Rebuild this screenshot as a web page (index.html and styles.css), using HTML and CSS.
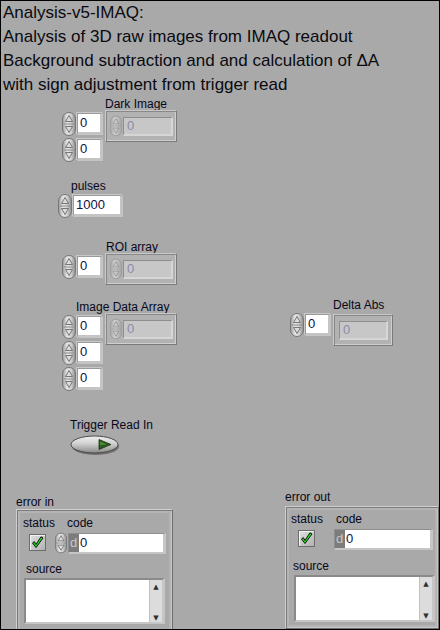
FILE: index.html
```html
<!DOCTYPE html>
<html>
<head>
<meta charset="utf-8">
<link rel="stylesheet" href="styles.css">
</head>
<body>
<svg class="defs" width="0" height="0" aria-hidden="true">
  <defs>
    <linearGradient id="spg" x1="0" y1="0" x2="1" y2="0">
      <stop offset="0" stop-color="#9a9a9a"/>
      <stop offset="0.35" stop-color="#e6e6e6"/>
      <stop offset="0.65" stop-color="#d4d4d4"/>
      <stop offset="1" stop-color="#8a8a8a"/>
    </linearGradient>
    <linearGradient id="spd" x1="0" y1="0" x2="1" y2="0">
      <stop offset="0" stop-color="#a8a8a8"/>
      <stop offset="0.4" stop-color="#cfcfcf"/>
      <stop offset="1" stop-color="#a4a4a4"/>
    </linearGradient>
    <linearGradient id="ovg" x1="0" y1="0" x2="0" y2="1">
      <stop offset="0" stop-color="#f0f0f0"/>
      <stop offset="0.45" stop-color="#d0d0d0"/>
      <stop offset="1" stop-color="#8a8a8a"/>
    </linearGradient>
    <linearGradient id="cbg" x1="0" y1="0" x2="1" y2="1">
      <stop offset="0" stop-color="#e2e2e2"/>
      <stop offset="1" stop-color="#b0b0b0"/>
    </linearGradient>
    <symbol id="spin" viewBox="0 0 14 24">
      <rect x="0.5" y="0.5" width="13" height="23" rx="6.5" fill="url(#spg)" stroke="#767676"/>
      <line x1="1.5" y1="12" x2="12.5" y2="12" stroke="#8c8c8c"/>
      <path d="M7 3.5 L10.5 9.5 H3.5 Z" fill="#dcdcdc" stroke="#6a6a6a" stroke-width="0.9"/>
      <path d="M7 20.5 L10.5 14.5 H3.5 Z" fill="#dcdcdc" stroke="#6a6a6a" stroke-width="0.9"/>
    </symbol>
    <symbol id="spindis" viewBox="0 0 14 24">
      <rect x="0.5" y="0.5" width="13" height="23" rx="6.5" fill="url(#spd)" stroke="#9a9a9a"/>
      <line x1="1.5" y1="12" x2="12.5" y2="12" stroke="#a4a4a4"/>
      <path d="M7 3.5 L10.5 9.5 H3.5 Z" fill="none" stroke="#949494" stroke-width="0.9"/>
      <path d="M7 20.5 L10.5 14.5 H3.5 Z" fill="none" stroke="#949494" stroke-width="0.9"/>
    </symbol>
    <symbol id="check" viewBox="0 0 17 17">
      <rect x="0.5" y="0.5" width="16" height="16" fill="url(#cbg)" stroke="#6c6c6c"/>
      <line x1="1" y1="1.5" x2="16" y2="1.5" stroke="#f4f4f4"/>
      <line x1="1.5" y1="1" x2="1.5" y2="16" stroke="#f4f4f4"/>
      <path d="M3.5 9 L7 13.5 L14 4 L12 2.8 L7 10.5 L5.3 7.6 Z" fill="#1ee61e" stroke="#101010" stroke-width="1" stroke-linejoin="round"/>
    </symbol>
  </defs>
</svg>

<div class="panel">
  <div class="title">
    <div>Analysis-v5-IMAQ:</div>
    <div>Analysis of 3D raw images from IMAQ readout</div>
    <div>Background subtraction and and calculation of &#916;A</div>
    <div>with sign adjustment from trigger read</div>
  </div>

  <!-- Dark Image -->
  <div class="ctl c-dark">
    <div class="lbl l-dark">Dark Image</div>
    <div class="arr">
      <div class="idxcol">
        <div class="num"><svg class="spin"><use href="#spin"/></svg><div class="nbox">0</div></div>
        <div class="num"><svg class="spin"><use href="#spin"/></svg><div class="nbox">0</div></div>
      </div>
      <div class="elem"><svg class="spin-d"><use href="#spindis"/></svg><div class="efield">0</div></div>
    </div>
  </div>

  <!-- pulses -->
  <div class="ctl c-pulses">
    <div class="lbl l-pulses">pulses</div>
    <div class="num"><svg class="spin"><use href="#spin"/></svg><div class="nbox wide">1000</div></div>
  </div>

  <!-- ROI array -->
  <div class="ctl c-roi">
    <div class="lbl l-roi">ROI array</div>
    <div class="arr">
      <div class="idxcol">
        <div class="num"><svg class="spin"><use href="#spin"/></svg><div class="nbox">0</div></div>
      </div>
      <div class="elem"><svg class="spin-d"><use href="#spindis"/></svg><div class="efield">0</div></div>
    </div>
  </div>

  <!-- Image Data Array -->
  <div class="ctl c-img">
    <div class="lbl l-img">Image Data Array</div>
    <div class="arr">
      <div class="idxcol">
        <div class="num"><svg class="spin"><use href="#spin"/></svg><div class="nbox">0</div></div>
        <div class="num"><svg class="spin"><use href="#spin"/></svg><div class="nbox">0</div></div>
        <div class="num"><svg class="spin"><use href="#spin"/></svg><div class="nbox">0</div></div>
      </div>
      <div class="elem"><svg class="spin-d"><use href="#spindis"/></svg><div class="efield">0</div></div>
    </div>
  </div>

  <!-- Delta Abs -->
  <div class="ctl c-delta">
    <div class="lbl l-delta">Delta Abs</div>
    <div class="arr">
      <div class="idxcol">
        <div class="num"><svg class="spin"><use href="#spin"/></svg><div class="nbox">0</div></div>
      </div>
      <div class="elem narrow"><div class="efield">0</div></div>
    </div>
  </div>

  <!-- Trigger Read In -->
  <div class="ctl c-trig">
    <div class="lbl">Trigger Read In</div>
    <svg class="oval" viewBox="0 0 50 22" width="50" height="22">
      <ellipse cx="25.5" cy="12.5" rx="23.5" ry="8.5" fill="#707070"/>
      <ellipse cx="24.5" cy="10.5" rx="23.5" ry="8.5" fill="url(#ovg)" stroke="#4a4a4a"/>
      <path d="M29 5.5 L41 10.5 L29 15.5 Z" fill="#2c5a22" stroke="#1a3312" stroke-width="0.8"/>
      <path d="M30 7.5 L37 10.3 L30 11.3 Z" fill="#4c8a38"/>
    </svg>
  </div>

  <!-- error in -->
  <div class="ctl c-errin">
    <div class="lbl">error in</div>
    <div class="cluster cl-in">
      <div class="errtop">
        <div class="scol">
          <div class="lbl">status</div>
          <svg class="chk"><use href="#check"/></svg>
        </div>
        <div class="ccol">
          <div class="lbl l-code">code</div>
          <div class="num"><svg class="spin sm"><use href="#spin"/></svg><div class="cbox"><span class="dpre">d</span><span class="cval">0</span></div></div>
        </div>
      </div>
      <div class="lbl l-src">source</div>
      <div class="srcbox"><div class="sb"><span class="ar">&#9650;</span><span class="ar">&#9660;</span></div></div>
    </div>
  </div>

  <!-- error out -->
  <div class="ctl c-errout">
    <div class="lbl">error out</div>
    <div class="cluster cl-out">
      <div class="errtop">
        <div class="scol">
          <div class="lbl">status</div>
          <svg class="chk"><use href="#check"/></svg>
        </div>
        <div class="ccol out">
          <div class="lbl l-code-o">code</div>
          <div class="num"><div class="cbox"><span class="dpre">d</span><span class="cval">0</span></div></div>
        </div>
      </div>
      <div class="lbl l-src">source</div>
      <div class="srcbox"><div class="sb"><span class="ar">&#9650;</span><span class="ar">&#9660;</span></div></div>
    </div>
  </div>
</div>
</body>
</html>
```
FILE: styles.css
```css
* { box-sizing: border-box; }
html, body { margin: 0; padding: 0; background: #a9a9a9; }
.defs { display: block; width: 0; height: 0; overflow: hidden; }

.panel {
  position: relative;
  width: 440px;
  height: 630px;
  border: 1px solid #000;
  background: #a9a9a9;
  overflow: hidden;
  font-family: "Liberation Sans", Arial, sans-serif;
  color: #000;
}

.title {
  padding-left: 2px;
  font-size: 17px;
  line-height: 24px;
  color: #0a0a10;
}

.ctl { position: absolute; }
.lbl { font-size: 12px; line-height: 16px; height: 16px; white-space: nowrap; color: #08081a; }

.c-dark { left: 61px; top: 95px; }
.l-dark { margin-left: 43px; }
.c-pulses { left: 57px; top: 177px; }
.l-pulses { margin-left: 13px; }
.c-roi { left: 61px; top: 238px; }
.l-roi { margin-left: 44px; }
.c-img { left: 61px; top: 298px; }
.l-img { margin-left: 14px; }
.c-delta { left: 289px; top: 296px; }
.l-delta { margin-left: 43px; }
.c-trig { left: 69px; top: 416px; }
.c-errin { left: 15px; top: 493px; }
.c-errout { left: 284px; top: 488px; }

.arr { display: flex; align-items: flex-start; gap: 2px; }
.idxcol { display: flex; flex-direction: column; gap: 2px; }
.num { display: flex; align-items: center; gap: 1px; height: 24px; }
.spin { width: 14px; height: 24px; display: block; flex: none; }
.spin.sm { width: 12px; height: 24px; }
.spin-d { width: 12px; height: 22px; display: block; flex: none; }

.nbox {
  width: 26px;
  height: 22px;
  background: #fff;
  border-style: solid;
  border-width: 1px 3px 3px 1px;
  border-color: #9a9a9a #c4c4c4 #c4c4c4 #9a9a9a;
  box-shadow: -1px -1px 0 #c8c8c8;
  font-size: 13px;
  line-height: 18px;
  padding-left: 2px;
  color: #10104a;
}
.nbox.wide { width: 50px; }

.elem {
  width: 72px;
  height: 32px;
  display: flex;
  align-items: center;
  gap: 1px;
  padding: 0 3px 0 4px;
  background: #b2b2b2;
  border: 1px solid;
  border-color: #c8c8c8 #7a7a7a #7a7a7a #c8c8c8;
  box-shadow: inset 1px 1px 0 #888, inset -1px -1px 0 #cfcfcf;
  margin-top: -2px;
}
.elem.narrow { width: 60px; padding: 0 4px 0 5px; margin-top: 1px; }
.efield {
  flex: 1;
  height: 19px;
  background: #c7c7c7;
  border-style: solid;
  border-width: 1px 2px 2px 1px;
  border-color: #8e8e8e #d6d6d6 #d6d6d6 #8e8e8e;
  font-size: 13px;
  line-height: 16px;
  padding-left: 3px;
  color: #8a8aa8;
}

.oval { display: block; margin-top: 1px; }

.cluster {
  border: 1px solid;
  border-color: #cfcfcf #6e6e6e #6e6e6e #cfcfcf;
  box-shadow: inset 1px 1px 0 #7c7c7c, inset -1px -1px 0 #c6c6c6, inset 0 0 0 3px #b4b4b4;
  padding: 5px 6px 0 6px;
}
.cl-in { width: 157px; height: 126px; margin-top: -1px; }
.cl-out { width: 154px; height: 123px; margin-top: 1px; padding: 4px 5px 0 5px; }

.errtop { display: flex; align-items: flex-start; }
.scol { width: 34px; }
.cl-out .scol { width: 46px; }
.chk { width: 17px; height: 17px; display: block; margin: 3px 0 0 6px; }
.cl-out .chk { margin: 3px 0 0 7px; }
.ccol .num { margin-top: 0; }
.l-code { margin-left: 12px; }
.l-code-o { margin-left: 2px; }
.ccol.out .num { margin-top: 1px; height: 22px; }

.cbox {
  width: 98px;
  height: 21px;
  display: flex;
  background: #fff;
  border-style: solid;
  border-width: 1px 3px 2px 1px;
  border-color: #8e8e8e #c6c6c6 #c6c6c6 #8e8e8e;
  font-size: 13px;
  line-height: 17px;
}
.cl-out .cbox { width: 99px; }
.dpre { width: 10px; background: #7c7c7c; color: #c8c8c8; padding-left: 1px; }
.cval { color: #10104a; padding-left: 1px; }

.l-src { margin-top: 6px; margin-left: 3px; }
.cl-out .l-src { margin-top: 8px; margin-left: 2px; }
.srcbox {
  margin-top: 1px;
  margin-left: 1px;
  width: 141px;
  height: 46px;
  background: #fff;
  border-style: solid;
  border-width: 2px 3px 2px 2px;
  border-color: #8a8a8a #c6c6c6 #c6c6c6 #8a8a8a;
  display: flex;
  justify-content: flex-end;
}
.cl-out .srcbox { margin-left: 3px; height: 47px; }
.sb {
  width: 13px;
  background: #dcdcdc;
  border-left: 1px solid #c0c0c0;
  display: flex;
  flex-direction: column;
  justify-content: space-between;
  align-items: center;
  padding: 3px 0 0 0;
}
.ar { font-size: 7px; line-height: 8px; color: #303030; font-family: "DejaVu Sans", sans-serif; }
```
